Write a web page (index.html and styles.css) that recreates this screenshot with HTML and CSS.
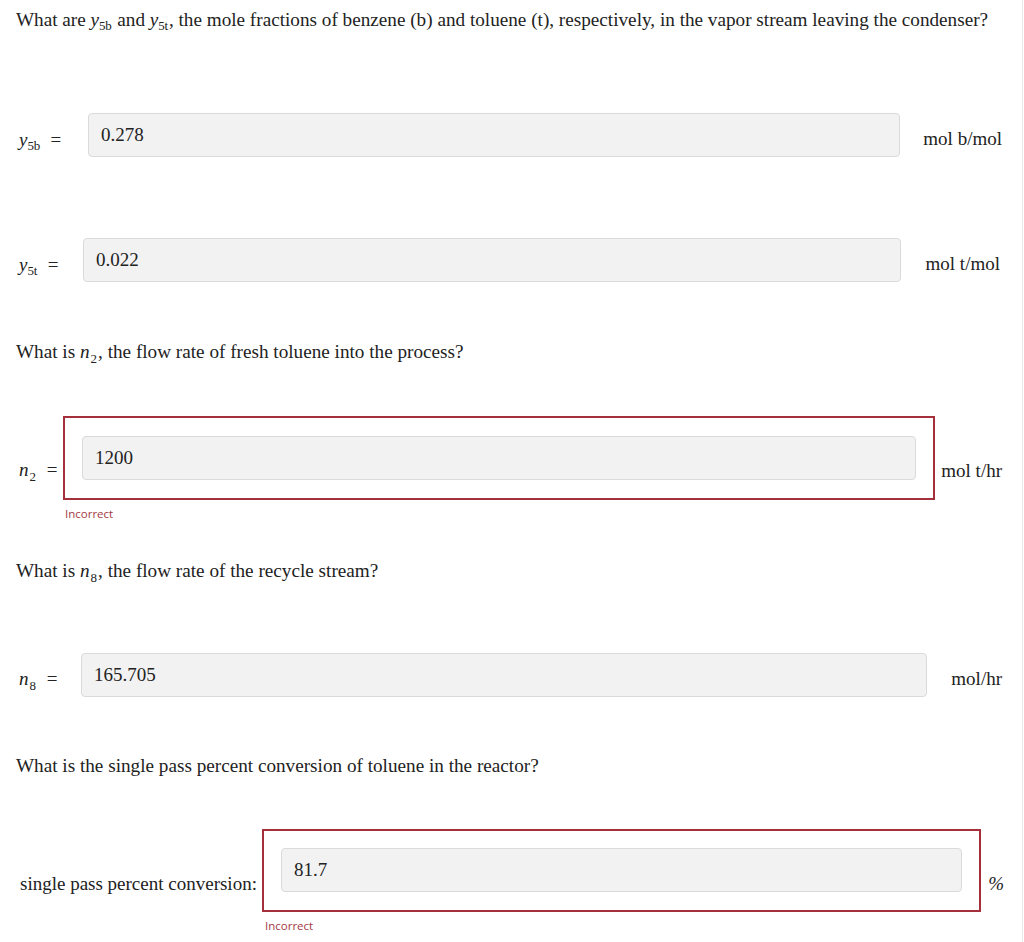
FILE: index.html
```html
<!DOCTYPE html>
<html>
<head>
<meta charset="utf-8">
<link rel="stylesheet" href="styles.css">
</head>
<body>
<div class="page">
  <p class="q q1">What are <span class="mi">y</span><sub class="sb">5b</sub> and <span class="mi">y</span><sub class="sb">5t</sub>, the mole fractions of benzene (b) and toluene (t), respectively, in the vapor stream leaving the condenser?</p>

  <div class="row r1">
    <span class="lbl l1"><span class="mi">y</span><sub class="sb">5b</sub> <span class="eq">=</span></span>
    <div class="field">0.278</div>
    <span class="unit u1">mol b/mol</span>
  </div>

  <div class="row r2">
    <span class="lbl l2"><span class="mi">y</span><sub class="sb">5t</sub> <span class="eq">=</span></span>
    <div class="field">0.022</div>
    <span class="unit u2">mol t/mol</span>
  </div>

  <p class="q q2">What is <span class="mi">n</span><sub class="sn">2</sub>, the flow rate of fresh toluene into the process?</p>

  <div class="row r3">
    <span class="lbl l3"><span class="mi">n</span><sub class="sn">2</sub> <span class="eq">=</span></span>
    <div class="wrong w3"><div class="field">1200</div></div>
    <span class="unit u3">mol t/hr</span>
  </div>
  <div class="msg m3">Incorrect</div>

  <p class="q q3">What is <span class="mi">n</span><sub class="sn">8</sub>, the flow rate of the recycle stream?</p>

  <div class="row r4">
    <span class="lbl l4"><span class="mi">n</span><sub class="sn">8</sub> <span class="eq">=</span></span>
    <div class="field">165.705</div>
    <span class="unit u4">mol/hr</span>
  </div>

  <p class="q q4">What is the single pass percent conversion of toluene in the reactor?</p>

  <div class="row r5">
    <span class="lbl l5">single pass percent conversion:</span>
    <div class="wrong w5"><div class="field">81.7</div></div>
    <span class="unit u5"><i class="pct">%</i></span>
  </div>
  <div class="msg m5">Incorrect</div>
</div>
</body>
</html>
```

FILE: styles.css
```css
html, body {
  margin: 0;
  padding: 0;
  background: #ffffff;
}
body {
  font-family: "Liberation Serif", "Times New Roman", serif;
  font-size: 19px;
  color: #222;
}
.page {
  width: 1022px;
  height: 942px;
  border-right: 1px solid #ebebeb;
  overflow: hidden;
}
.q {
  margin: 0;
  padding-left: 16px;
  line-height: 24px;
  font-size: 19.2px;
  white-space: nowrap;
}
.q1 { margin-top: 8px; }
.q2 { margin-top: 58px; }
.q3 { margin-top: 37px; }
.q4 { margin-top: 57px; }

.mi { font-style: italic; }
.sb, .sn {
  font-family: "Liberation Serif", "Times New Roman", serif;
  font-size: 13px;
  vertical-align: baseline;
  position: relative;
  line-height: 0;
  margin-right: 1px;
}
.sb { top: 4px; letter-spacing: -0.3px; }
.sn { top: 5px; margin-left: 1px; }
.eq { margin-left: 5px; }

.row {
  display: flex;
  align-items: center;
  padding-left: 19px;
  box-sizing: border-box;
}
.lbl, .unit {
  white-space: nowrap;
  line-height: 24px;
}
.field {
  flex: 1;
  height: 44px;
  box-sizing: border-box;
  background: #f2f2f2;
  border: 1px solid #dadada;
  border-radius: 4px;
  padding: 0 12px;
  line-height: 42px;
  font-size: 19px;
  color: #222;
}

.r1 { margin-top: 81px; padding-right: 20px; }
.l1 { width: 69px; padding-top: 9px; }
.u1 { margin-left: 23px; padding-top: 8px; }

.r2 { margin-top: 81px; padding-right: 22px; }
.l2 { width: 64px; padding-top: 9px; }
.u2 { margin-left: 25px; padding-top: 8px; }

.r3 { margin-top: 52px; padding-right: 20px; }
.l3 { width: 44px; padding-top: 24px; }
.u3 { margin-left: 6px; padding-top: 26px; }

.r4 { margin-top: 70px; padding-right: 20px; }
.l4 { width: 62px; padding-top: 7px; }
.u4 { margin-left: 24px; padding-top: 7px; }

.r5 { margin-top: 51px; padding-left: 20px; padding-right: 18px; }
.l5 { margin-right: 5px; padding-top: 27px; }
.u5 { margin-left: 7px; padding-top: 27px; }

.wrong {
  flex: 1;
  display: flex;
  border: 2px solid #a5303c;
  padding: 18px 17px;
}
.w5 { padding: 17px 17px 18px; }

.pct { font-style: italic; }

.msg {
  font-family: "Open Sans", "Liberation Sans", sans-serif;
  font-size: 11.5px;
  line-height: 16px;
  color: #a33a44;
  margin-top: 6px;
}
.m3 { padding-left: 65px; }
.m5 { padding-left: 265px; }
```
